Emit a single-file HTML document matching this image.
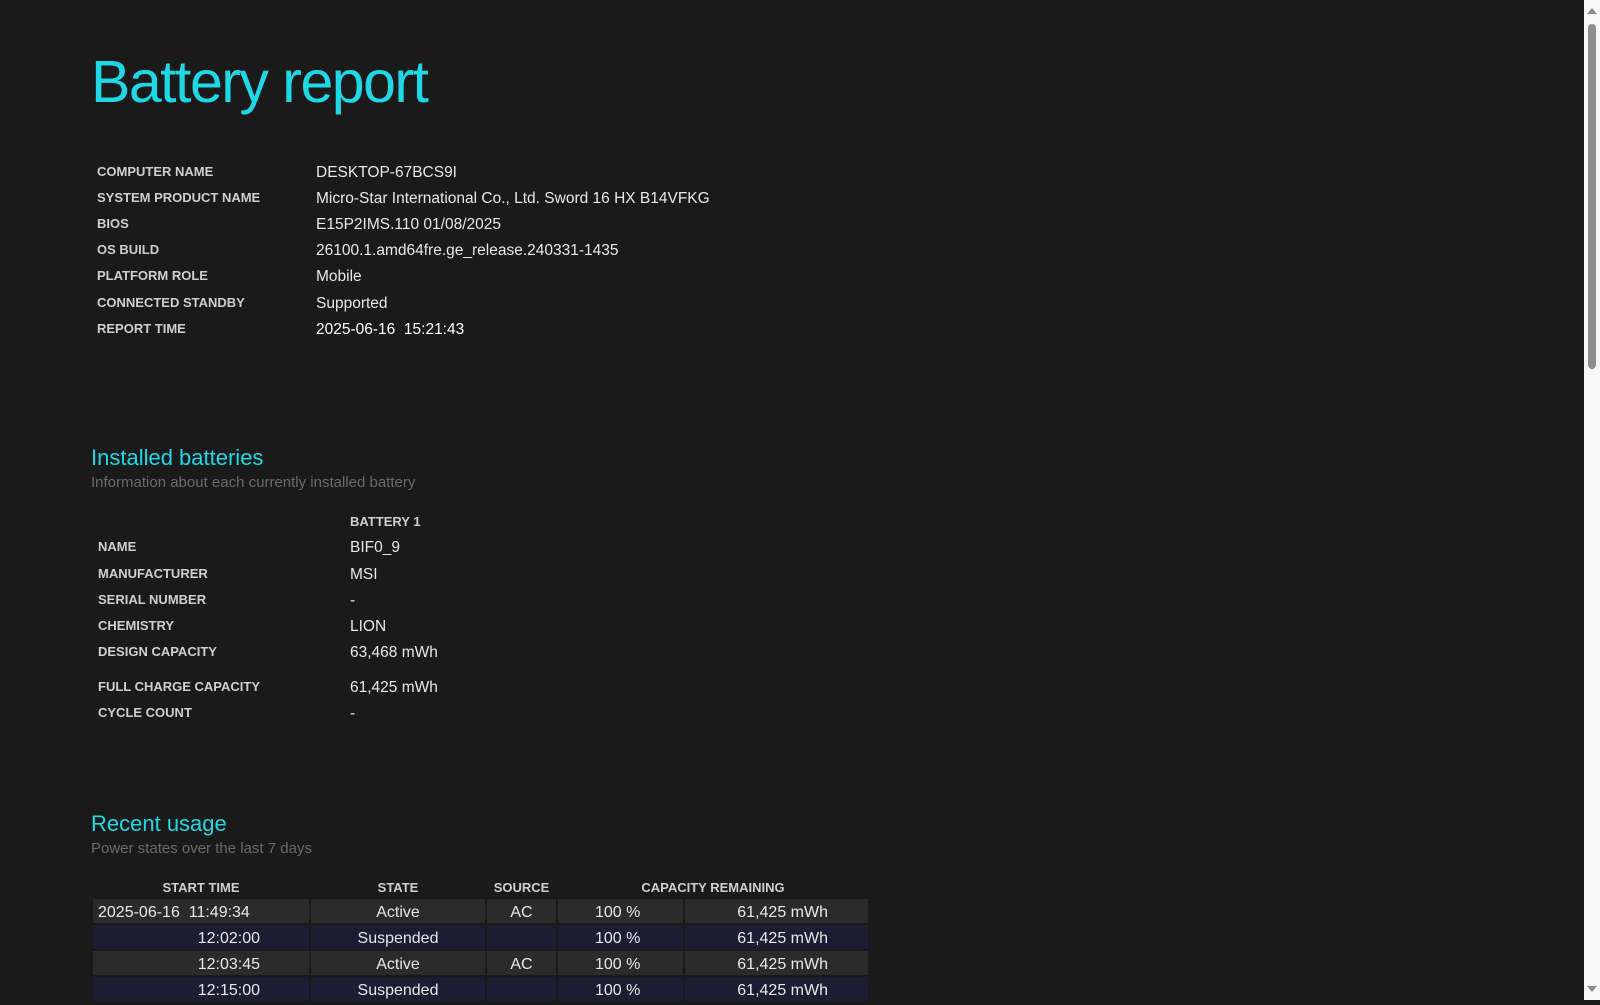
<!DOCTYPE html>
<html><head><meta charset="utf-8"><style>
html,body{margin:0;padding:0;background:#1a1a1a;width:1600px;height:1000px;overflow:hidden;font-family:"Liberation Sans",sans-serif;color:#e6e6e6}
.a{position:absolute;white-space:nowrap}
.t{color:#1fd8e6}
.l{font-size:13px;font-weight:bold;color:#cfcfcf}
.v{font-size:15.5px;color:#e8e8e8}
.sub{font-size:15px;color:#6a6a6a}
.sb{position:absolute;left:1584px;top:0;width:16px;height:1000px;background:#f8f8f8}
.cell{position:absolute;height:24px;line-height:28px;font-size:16px;color:#e8e8e8}
.r1{background:#2b2b2b}.r2{background:#1c1c33}
</style></head><body>
<div class="a t" style="left:91px;top:48px;font-size:59px;letter-spacing:-1.5px">Battery report</div>

<div class="a l" style="left:97px;top:164px">COMPUTER NAME</div><div class="a v" style="left:316px;top:164px">DESKTOP-67BCS9I</div>
<div class="a l" style="left:97px;top:190px">SYSTEM PRODUCT NAME</div><div class="a v" style="left:316px;top:190px">Micro-Star International Co., Ltd. Sword 16 HX B14VFKG</div>
<div class="a l" style="left:97px;top:216px">BIOS</div><div class="a v" style="left:316px;top:216px">E15P2IMS.110 01/08/2025</div>
<div class="a l" style="left:97px;top:242px">OS BUILD</div><div class="a v" style="left:316px;top:242px">26100.1.amd64fre.ge_release.240331-1435</div>
<div class="a l" style="left:97px;top:268px">PLATFORM ROLE</div><div class="a v" style="left:316px;top:268px">Mobile</div>
<div class="a l" style="left:97px;top:295px">CONNECTED STANDBY</div><div class="a v" style="left:316px;top:295px">Supported</div>
<div class="a l" style="left:97px;top:321px">REPORT TIME</div><div class="a v" style="left:316px;top:321px;color:#fff">2025-06-16&nbsp; 15:21:43</div>

<div class="a t" style="left:91px;top:445px;font-size:22px">Installed batteries</div>
<div class="a sub" style="left:91px;top:474px">Information about each currently installed battery</div>
<div class="a l" style="left:350px;top:514px">BATTERY 1</div>
<div class="a l" style="left:98px;top:539px">NAME</div><div class="a v" style="left:350px;top:539px">BIF0_9</div>
<div class="a l" style="left:98px;top:566px">MANUFACTURER</div><div class="a v" style="left:350px;top:566px">MSI</div>
<div class="a l" style="left:98px;top:592px">SERIAL NUMBER</div><div class="a v" style="left:350px;top:592px">-</div>
<div class="a l" style="left:98px;top:618px">CHEMISTRY</div><div class="a v" style="left:350px;top:618px">LION</div>
<div class="a l" style="left:98px;top:644px">DESIGN CAPACITY</div><div class="a v" style="left:350px;top:644px">63,468 mWh</div>
<div class="a l" style="left:98px;top:679px">FULL CHARGE CAPACITY</div><div class="a v" style="left:350px;top:679px">61,425 mWh</div>
<div class="a l" style="left:98px;top:705px">CYCLE COUNT</div><div class="a v" style="left:350px;top:705px">-</div>

<div class="a t" style="left:91px;top:811px;font-size:22px">Recent usage</div>
<div class="a sub" style="left:91px;top:840px">Power states over the last 7 days</div>

<div class="a l" style="left:93px;top:880px;width:216px;text-align:center">START TIME</div>
<div class="a l" style="left:311px;top:880px;width:174px;text-align:center">STATE</div>
<div class="a l" style="left:487px;top:880px;width:69px;text-align:center">SOURCE</div>
<div class="a l" style="left:558px;top:880px;width:310px;text-align:center">CAPACITY REMAINING</div>

<div style="position:absolute;left:0;top:899px">
<div class="cell r1" style="left:93px;top:0;width:211px;padding-left:5px">2025-06-16&nbsp; 11:49:34</div>
<div class="cell r1" style="left:311px;top:0;width:174px;text-align:center">Active</div>
<div class="cell r1" style="left:487px;top:0;width:69px;text-align:center">AC</div>
<div class="cell r1" style="left:558px;top:0;width:88px;padding-left:37px">100 %</div>
<div class="cell r1" style="left:685px;top:0;width:143px;padding-right:40px;text-align:right">61,425 mWh</div>

<div class="cell r2" style="left:93px;top:26px;width:167px;padding-right:49px;text-align:right">12:02:00</div>
<div class="cell r2" style="left:311px;top:26px;width:174px;text-align:center">Suspended</div>
<div class="cell r2" style="left:487px;top:26px;width:69px"></div>
<div class="cell r2" style="left:558px;top:26px;width:88px;padding-left:37px">100 %</div>
<div class="cell r2" style="left:685px;top:26px;width:143px;padding-right:40px;text-align:right">61,425 mWh</div>

<div class="cell r1" style="left:93px;top:52px;width:167px;padding-right:49px;text-align:right">12:03:45</div>
<div class="cell r1" style="left:311px;top:52px;width:174px;text-align:center">Active</div>
<div class="cell r1" style="left:487px;top:52px;width:69px;text-align:center">AC</div>
<div class="cell r1" style="left:558px;top:52px;width:88px;padding-left:37px">100 %</div>
<div class="cell r1" style="left:685px;top:52px;width:143px;padding-right:40px;text-align:right">61,425 mWh</div>

<div class="cell r2" style="left:93px;top:78px;width:167px;padding-right:49px;text-align:right">12:15:00</div>
<div class="cell r2" style="left:311px;top:78px;width:174px;text-align:center">Suspended</div>
<div class="cell r2" style="left:487px;top:78px;width:69px"></div>
<div class="cell r2" style="left:558px;top:78px;width:88px;padding-left:37px">100 %</div>
<div class="cell r2" style="left:685px;top:78px;width:143px;padding-right:40px;text-align:right">61,425 mWh</div>
</div>

<div class="sb">
<div style="position:absolute;left:3px;top:8px;width:0;height:0;border-left:5px solid transparent;border-right:5px solid transparent;border-bottom:6px solid #8a8a8a"></div>
<div style="position:absolute;left:4px;top:24px;width:8px;height:345px;background:#8f8f8f;border-radius:4px"></div>
<div style="position:absolute;left:3px;top:986px;width:0;height:0;border-left:5px solid transparent;border-right:5px solid transparent;border-top:6px solid #8a8a8a"></div>
</div>
</body></html>
